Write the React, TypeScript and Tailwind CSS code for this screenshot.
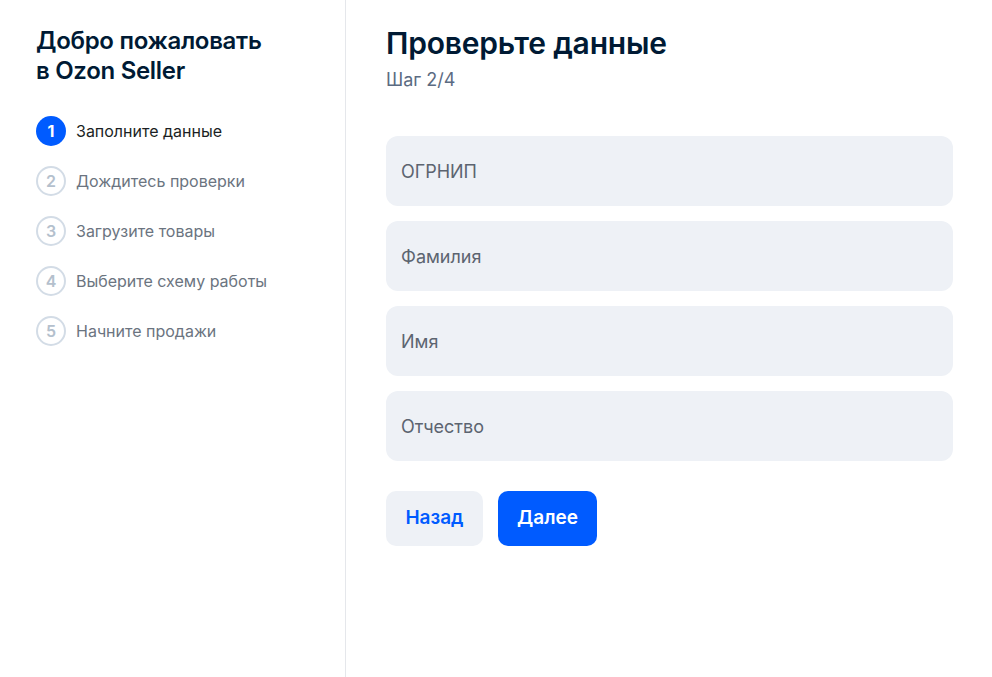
import React from "react";

const steps = [
  "Заполните данные",
  "Дождитесь проверки",
  "Загрузите товары",
  "Выберите схему работы",
  "Начните продажи",
];

const fields = ["ОГРНИП", "Фамилия", "Имя", "Отчество"];

export default function App() {
  return (
    <div className="flex h-[677px] w-[992px] bg-white font-['Inter',sans-serif] text-[#001a34]">
      <aside className="w-[346px] shrink-0 border-r border-[#e5e7eb] pl-9 pt-[26px]">
        <h1 className="text-[24px] font-semibold leading-[30px] tracking-[-0.3px]">
          Добро пожаловать
          <br />в Ozon Seller
        </h1>
        <ul className="mt-[30px] flex flex-col gap-5">
          {steps.map((s, i) => (
            <li key={s} className="flex items-center gap-2.5">
              {i === 0 ? (
                <span className="flex h-[30px] w-[30px] items-center justify-center rounded-full bg-[#005bff] text-[16px] font-bold text-white">
                  1
                </span>
              ) : (
                <span className="flex h-[30px] w-[30px] items-center justify-center rounded-full border-2 border-[#d3dce6] text-[16px] font-semibold text-[#b4c0cd]">
                  {i + 1}
                </span>
              )}
              <span
                className={`text-[16px] ${i === 0 ? "text-[#1b1f24]" : "text-[#6b7480]"}`}
              >
                {s}
              </span>
            </li>
          ))}
        </ul>
      </aside>

      <main className="flex-1 pl-10 pr-[39px] pt-[23px]">
        <h2 className="text-[30px] font-semibold leading-[40px] tracking-[-0.2px]">
          Проверьте данные
        </h2>
        <p className="mt-[4px] text-[18px] leading-[26px] text-[#5b6b82]">Шаг 2/4</p>

        <div className="mt-[43px] flex flex-col gap-[15px]">
          {fields.map((f) => (
            <div
              key={f}
              className="flex h-[70px] items-center rounded-xl bg-[#eef1f6] px-[15px] text-[18px] text-[#5c6470]"
            >
              {f}
            </div>
          ))}
        </div>

        <div className="mt-[30px] flex gap-[15px]">
          <button className="h-[55px] w-[97px] rounded-[10px] bg-[#eef1f6] text-[19px] font-semibold text-[#005bff]">
            Назад
          </button>
          <button className="h-[55px] w-[99px] rounded-[10px] bg-[#005bff] text-[19px] font-semibold text-white">
            Далее
          </button>
        </div>
      </main>
    </div>
  );
}
